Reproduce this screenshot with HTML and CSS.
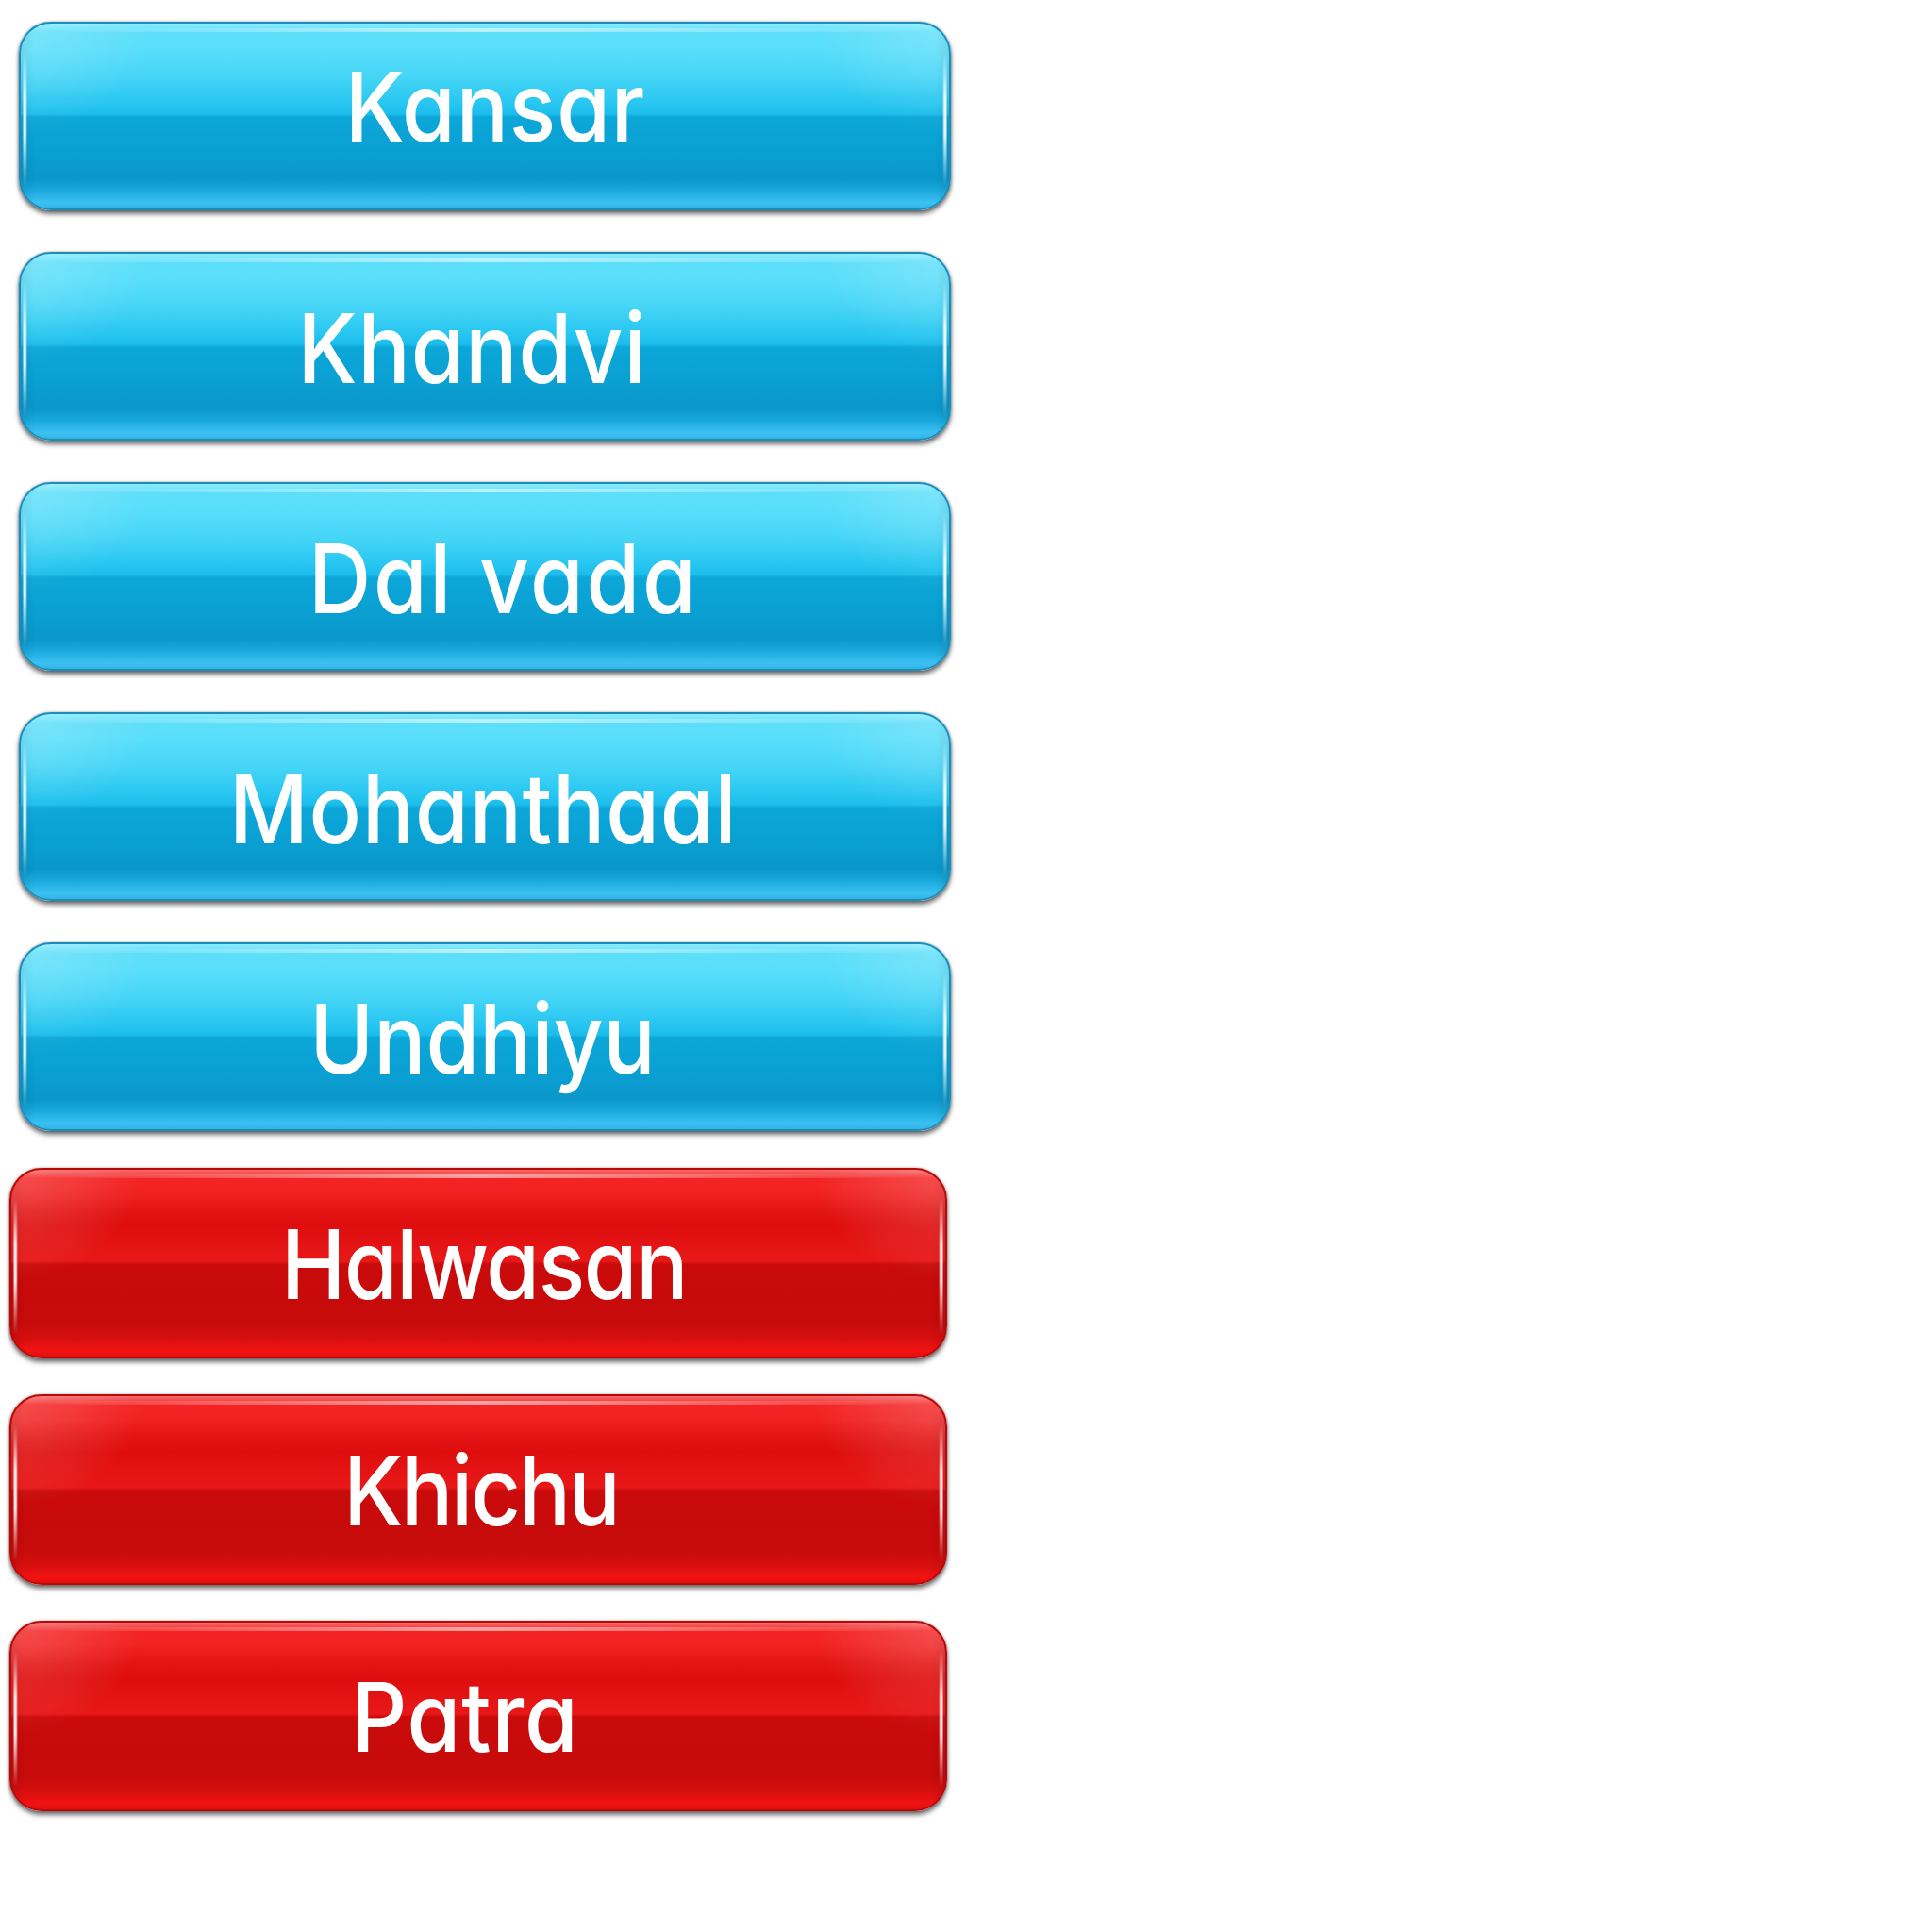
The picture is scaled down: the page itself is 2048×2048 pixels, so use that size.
FILE: index.html
```html
<!DOCTYPE html>
<html>
<head>
<meta charset="utf-8">
<link rel="stylesheet" href="styles.css">
</head>
<body>
<div class="list">
  <div class="btn blue"><span class="label label--kansar">Kansar</span></div>
  <div class="btn blue"><span class="label label--khandvi">Khandvi</span></div>
  <div class="btn blue"><span class="label label--dalvada">Dal vada</span></div>
  <div class="btn blue"><span class="label label--mohanthaal">Mohanthaal</span></div>
  <div class="btn blue"><span class="label label--undhiyu">Undhiyu</span></div>
  <div class="btn red first-red"><span class="label label--halwasan">Halwasan</span></div>
  <div class="btn red"><span class="label label--khichu">Khichu</span></div>
  <div class="btn red"><span class="label label--patra">Patra</span></div>
</div>
</body>
</html>
```

FILE: styles.css
```css
html, body {
  margin: 0;
  padding: 0;
  background: #ffffff;
}

.list {
  display: flex;
  flex-direction: column;
  align-items: flex-start;
  padding-top: 23px;
}

.btn {
  position: relative;
  box-sizing: border-box;
  border-radius: 34px;
  display: flex;
  justify-content: center;
  align-items: flex-start;
  overflow: hidden;
  box-shadow: 0 4px 5px rgba(0, 0, 0, 0.55), 0 0 3px rgba(0, 0, 0, 0.35);
}

.blue {
  margin-left: 20px;
  width: 988px;
  height: 200px;
  margin-bottom: 44px;
  border: 2px solid #1a8dbd;
  background:
    linear-gradient(to bottom,
      #8cecff 0px, #5ddff9 9px, #58defb 14%, #47d6f7 28%, #26c5f0 44%, #1cbdec 49%,
      #0ca7d8 50.5%, #0a9fd2 70%, #0b97cb 84%, #1aa9dd 90%, #3cc1f2 97%, #33b3e2 100%);
}

.red {
  margin-left: 10px;
  width: 994px;
  height: 202px;
  margin-bottom: 38px;
  border: 2px solid #b80808;
  background:
    linear-gradient(to bottom,
      #f86a6a 0px, #f42424 9px, #f22222 12%, #e41414 22%, #df0e0e 30%, #e61616 44%, #e81818 49%,
      #ca0b0b 50.5%, #c70a0a 70%, #c80b0b 82%, #d50f0f 90%, #f21212 97%, #e20f0f 100%);
}

.first-red {
  margin-top: -5px;
}

/* top highlight line and corner glare */
.btn::before {
  content: "";
  position: absolute;
  left: 0;
  right: 0;
  top: 0;
  height: 100%;
  border-radius: 32px;
  background:
    linear-gradient(to right, rgba(255,255,255,0) 3%, rgba(255,255,255,0.55) 50%, rgba(255,255,255,0) 97%) top 5px left 0 / 100% 4px no-repeat,
    radial-gradient(ellipse 140px 120px at 0% 0%, rgba(255,255,255,0.2), rgba(255,255,255,0) 100%),
    radial-gradient(ellipse 140px 120px at 100% 0%, rgba(255,255,255,0.2), rgba(255,255,255,0) 100%),
    linear-gradient(to right, rgba(0,0,0,0.08) 0px, rgba(0,0,0,0) 14px, rgba(0,0,0,0) calc(100% - 14px), rgba(0,0,0,0.08) 100%);
  pointer-events: none;
}

/* vertical side glints */
.btn::after {
  content: "";
  position: absolute;
  left: 0;
  right: 0;
  top: 0;
  bottom: 0;
  background: linear-gradient(to right,
    rgba(255,255,255,0) 0px, rgba(255,255,255,0) 2px,
    rgba(255,255,255,0.9) 3px, rgba(255,255,255,0.9) 5px,
    rgba(255,255,255,0) 7px, rgba(255,255,255,0) calc(100% - 7px),
    rgba(255,255,255,0.9) calc(100% - 5px), rgba(255,255,255,0.9) calc(100% - 3px),
    rgba(255,255,255,0) calc(100% - 2px));
  -webkit-mask-image: linear-gradient(to bottom, transparent 15%, #000 40%, #000 60%, transparent 88%);
  mask-image: linear-gradient(to bottom, transparent 15%, #000 40%, #000 60%, transparent 88%);
  pointer-events: none;
}

.label {
  position: relative;
  z-index: 1;
  display: block;
  padding-top: 49px;
  font-family: "Inter", "DejaVu Sans", sans-serif;
  font-feature-settings: "cv11" 1;
  font-size: 102px;
  font-weight: 500;
  line-height: 1;
  letter-spacing: 1px;
  color: #ffffff;
  transform: scaleX(0.9);
  white-space: nowrap;
}

/* per-label nudges so each caption sits where it does in the design */
.label--kansar { padding-top: 37px; margin-left: 22px; }
.label--khandvi { margin-right: 28px; }
.label--dalvada { margin-left: 40px; letter-spacing: 3px; }
.label--mohanthaal { margin-right: 4px; }
.label--undhiyu { margin-right: 4px; letter-spacing: 0; }
.label--halwasan { margin-left: 12px; letter-spacing: -1.5px; }
.label--khichu { margin-left: 6px; letter-spacing: -2.5px; }
.label--patra { margin-right: 28px; }
```
